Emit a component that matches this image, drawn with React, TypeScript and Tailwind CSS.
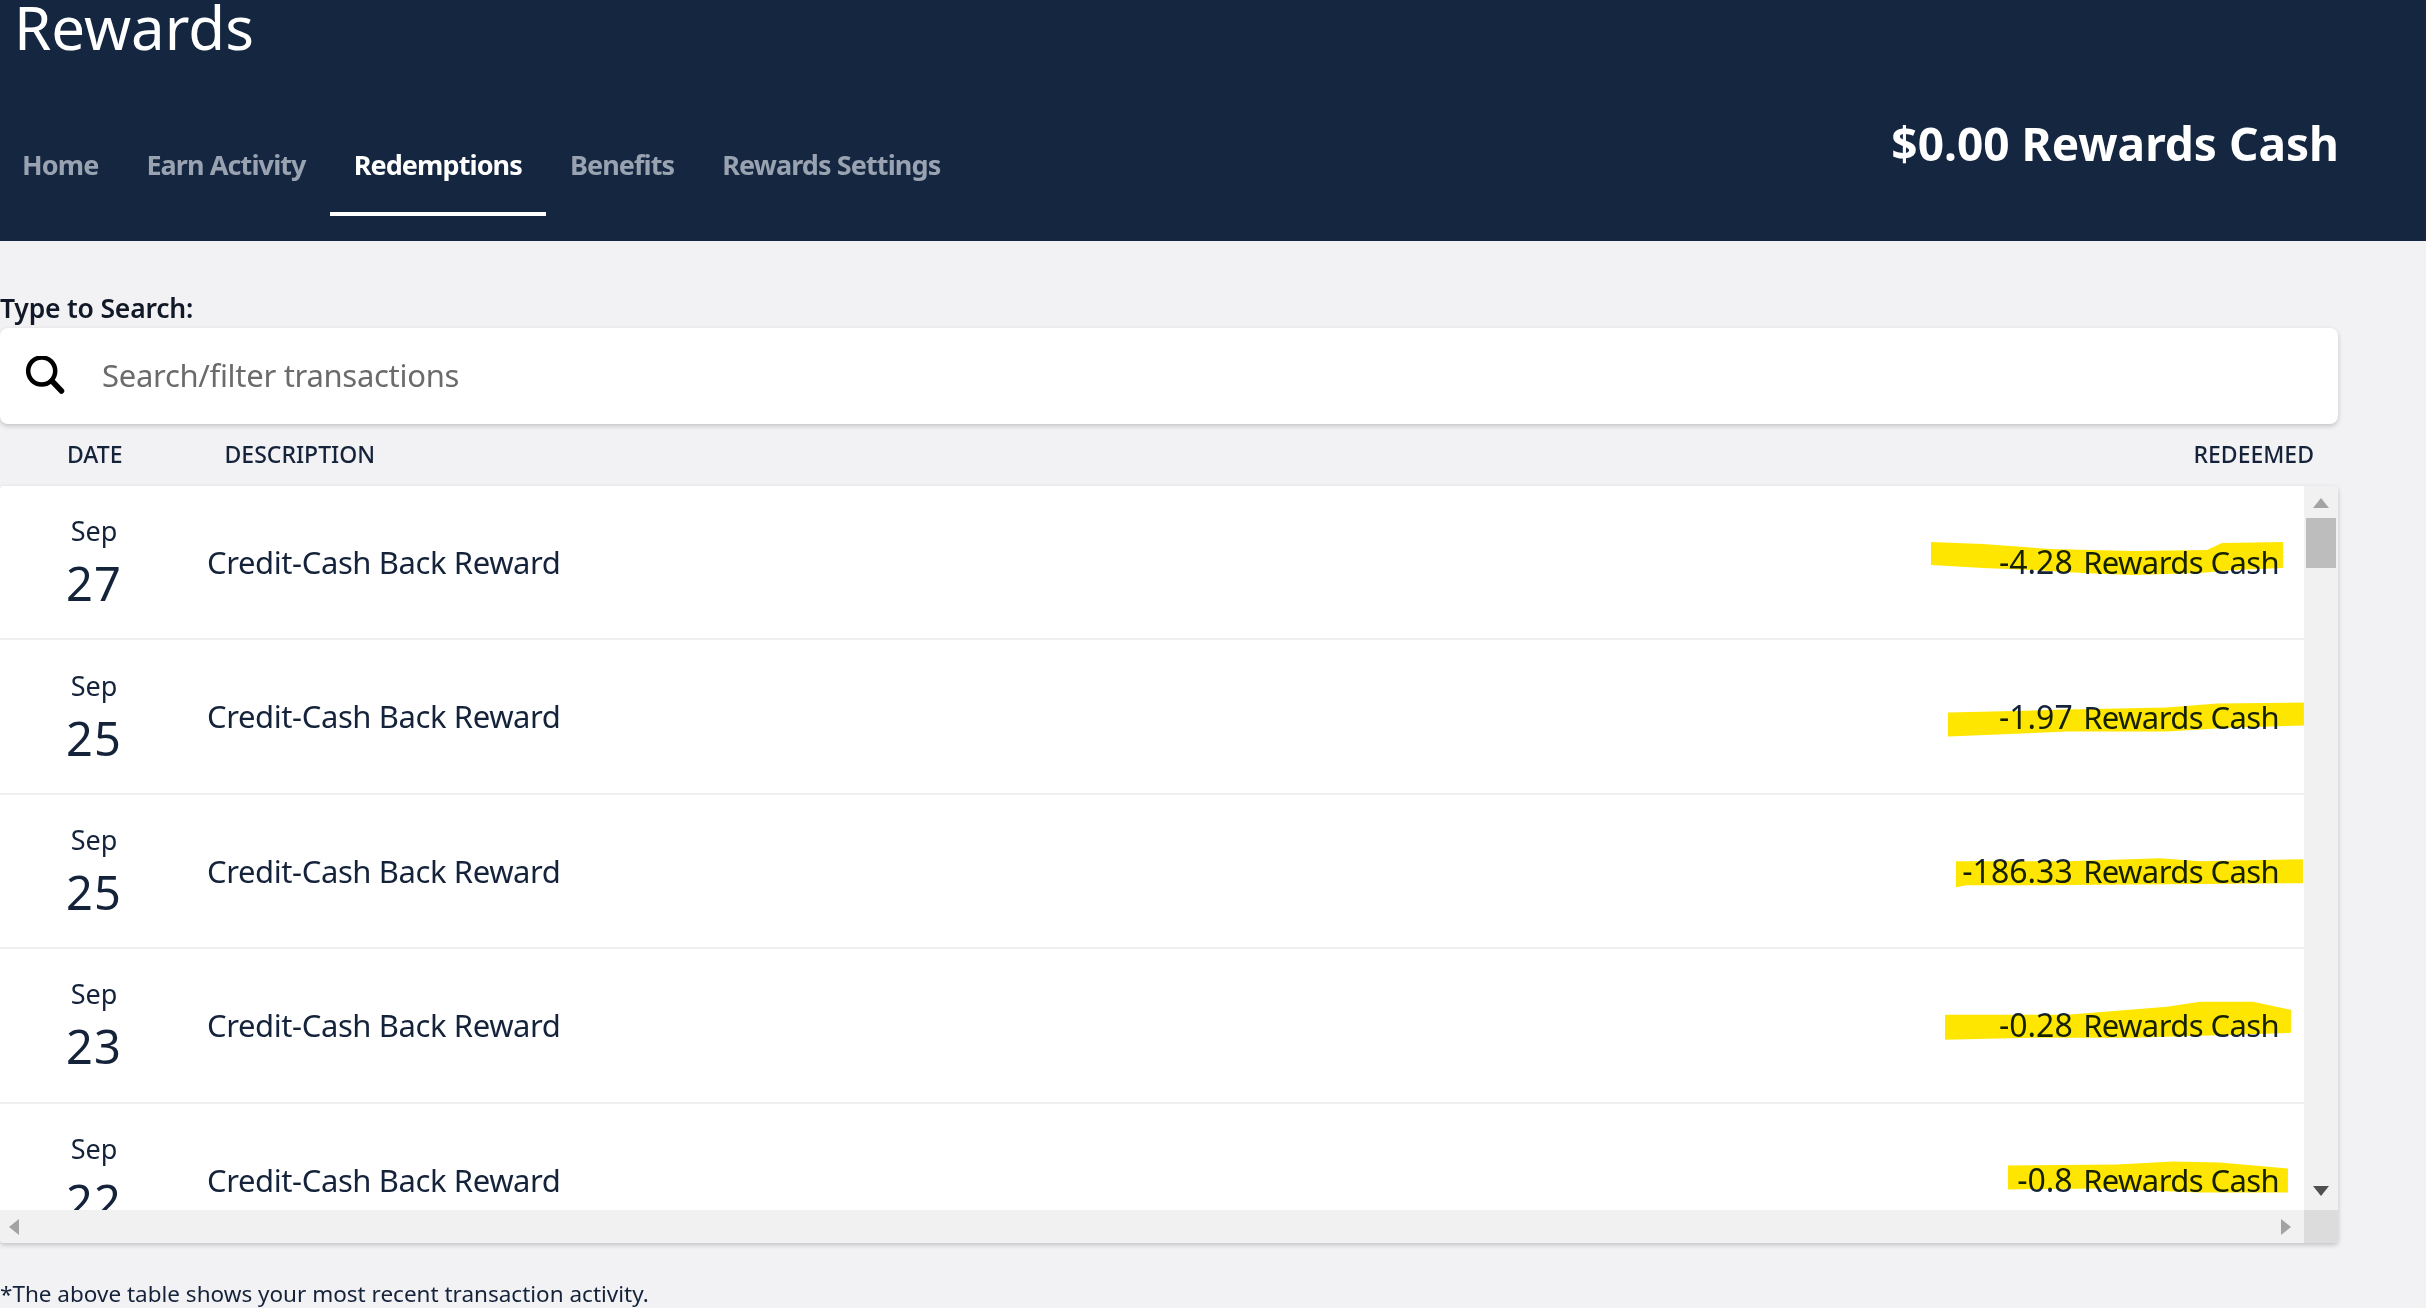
const tabs = ["Home", "Earn Activity", "Redemptions", "Benefits", "Rewards Settings"];

// yellow marker strokes, in page coordinates
const rows = [
  {
    day: "27",
    value: "-4.28",
    mark: "M1931 542 L1983 544 L2050 549 L2133 551 L2207 550 L2222 543 L2283 542 L2283 568 L2233 570 L2200 573 L2133 575 L2083 573 L2033 570 L1983 568 L1931 565 Z",
  },
  {
    day: "25",
    value: "-1.97",
    mark: "M1948 713 L2067 710 L2167 708 L2217 704 L2304 703 L2304 726 L2233 728 L2167 732 L2067 732 L1948 737 Z",
  },
  {
    day: "25",
    value: "-186.33",
    mark: "M1956 861 L2067 861 L2160 858 L2200 861 L2303 859 L2303 883 L2167 884 L2033 885 L1967 885 L1956 887 Z",
  },
  {
    day: "23",
    value: "-0.28",
    mark: "M1945 1015 L2067 1015 L2167 1007 L2200 1002 L2253 1002 L2291 1010 L2291 1033 L2233 1035 L2133 1038 L2033 1038 L1945 1040 Z",
  },
  {
    day: "22",
    value: "-0.8",
    mark: "M2008 1165 L2117 1164 L2173 1161 L2220 1162 L2288 1168 L2288 1192 L2200 1192 L2100 1188 L2008 1189 Z",
  },
];

function SearchIcon() {
  return (
    <svg viewBox="0 0 40 40" className="w-[40px] h-[40px] shrink-0" fill="none" stroke="#000" strokeWidth="4.5">
      <circle cx="15.7" cy="15" r="13.5" />
      <path d="M26 25 L35.5 35" strokeWidth="5.5" strokeLinecap="round" />
    </svg>
  );
}

function Row({ day, value, mark, top }: { day: string; value: string; mark: string; top: number }) {
  return (
    <div className="relative flex items-center h-[154.4px] shrink-0 border-b-2 border-[#f0f0f2] text-[#14233a]">
      <div className="w-[188px] shrink-0 flex flex-col items-center pt-[3px]">
        <span className="text-[27px] leading-[36px]">Sep</span>
        <span className="mt-[3px] text-[47px] leading-[62px] tracking-[1px]">{day}</span>
      </div>
      <div className="ml-[19px] text-[31px] tracking-[-0.4px]">Credit-Cash Back Reward</div>
      <div className="ml-auto pr-[25px] text-[32px]">
        {value}
        <span className="ml-[3px] text-[31px] tracking-[-0.6px]"> Rewards Cash</span>
      </div>
      <svg
        className="absolute left-0 top-0 w-[2304px] h-[154.4px] mix-blend-multiply pointer-events-none"
        viewBox={`0 ${top} 2304 154.4`}
      >
        <path d={mark} fill="#ffe600" />
      </svg>
    </div>
  );
}

export default function App() {
  return (
    <div className="w-[2426px] h-[1308px] overflow-hidden bg-[#f2f1f4] font-['Noto_Sans',sans-serif]">
      <header className="relative h-[241px] bg-[#152640] text-white">
        <h1 className="pl-[14px] text-[60px] leading-[54px] h-[100px]">Rewards</h1>
        <nav className="flex -ml-[2px] mt-[36px]">
          {tabs.map((t) => (
            <div
              key={t}
              className={
                t === "Redemptions"
                  ? "px-6 h-[80px] flex items-center pb-[18px] text-[27px] tracking-[-0.9px] font-bold text-white border-b-[4px] border-white"
                  : "px-6 h-[80px] flex items-center pb-[18px] text-[27px] tracking-[-0.9px] font-bold text-[#98a2b0] border-b-[4px] border-transparent"
              }
            >
              {t}
            </div>
          ))}
        </nav>
        <div className="absolute right-[87px] top-[113px] text-[46px] leading-[60px] font-bold">$0.00 Rewards Cash</div>
      </header>

      <main className="w-[2338px]">
        <label className="block mt-[48px] mb-[1px] text-[26.5px] leading-[38px] font-semibold tracking-[-0.2px] text-[#111827]">
          Type to Search:
        </label>
        <div className="flex items-center h-[96px] bg-white rounded-lg shadow-[0_2px_5px_rgba(0,0,0,0.2)] pl-[26px]">
          <SearchIcon />
          <span className="ml-[36px] pb-[2px] text-[31px] tracking-[-0.3px] text-[#6b6b6b]">Search/filter transactions</span>
        </div>
        <div className="flex items-center h-[62px] pb-[2px] text-[23px] font-medium text-[#14233a]">
          <span className="ml-[67px]">DATE</span>
          <span className="ml-[102px]">DESCRIPTION</span>
          <span className="ml-auto mr-[24px]">REDEEMED</span>
        </div>

        <div className="flex flex-col h-[757px] rounded-sm overflow-hidden shadow-[0_2px_5px_rgba(0,0,0,0.2)]">
          <div className="flex h-[724px]">
            <div className="flex-1 flex flex-col overflow-hidden bg-white">
              {rows.map((r, i) => (
                <Row key={i} day={r.day} value={r.value} mark={r.mark} top={486 + i * 154.4} />
              ))}
            </div>
            {/* vertical scrollbar */}
            <div className="w-[34px] bg-[#f1f1f1] flex flex-col items-center px-[2px]">
              <svg viewBox="0 0 16 10" className="w-[16px] h-[10px] mt-[12px]">
                <path d="M8 0 L16 10 L0 10 Z" fill="#a3a3a3" />
              </svg>
              <div className="w-full h-[50px] mt-[10px] bg-[#bdbdbd]" />
              <svg viewBox="0 0 16 10" className="w-[16px] h-[10px] mt-auto mb-[14px]">
                <path d="M0 0 L16 0 L8 10 Z" fill="#505050" />
              </svg>
            </div>
          </div>
          {/* horizontal scrollbar */}
          <div className="flex h-[33px]">
            <div className="flex-1 bg-[#f1f1f1] flex items-center justify-between pl-[9px] pr-[13px]">
              <svg viewBox="0 0 10 16" className="w-[10px] h-[16px]">
                <path d="M10 0 L10 16 L0 8 Z" fill="#a3a3a3" />
              </svg>
              <svg viewBox="0 0 10 16" className="w-[10px] h-[16px]">
                <path d="M0 0 L10 8 L0 16 Z" fill="#a3a3a3" />
              </svg>
            </div>
            <div className="w-[34px] bg-[#dcdcdc]" />
          </div>
        </div>

        <p className="mt-[35px] text-[22.5px] leading-[32px] text-[#14233a]">
          *The above table shows your most recent transaction activity.
        </p>
      </main>
    </div>
  );
}
